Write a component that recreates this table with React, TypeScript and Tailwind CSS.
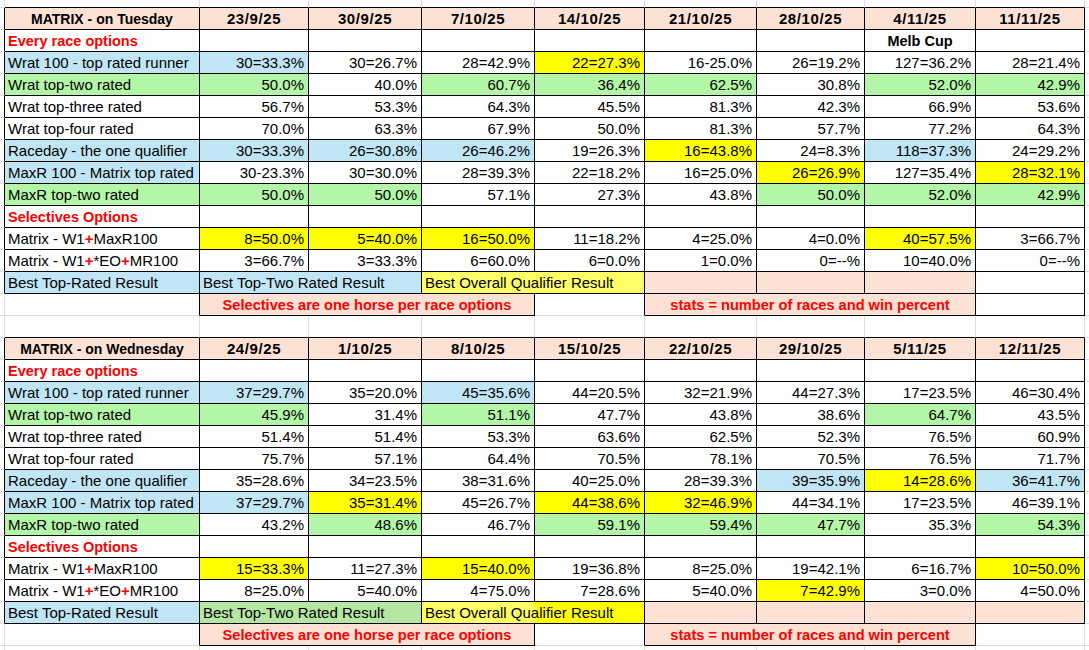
import React from 'react';

type Spec = {
  t?: React.ReactNode;
  bg?: string;
  al?: 'l' | 'r' | 'c';
  bold?: boolean;
  red?: boolean;
  span?: number;
  r?: 'k' | 'g' | 'n';
  b?: 'k' | 'g' | 'n';
  x?: string;
};

const BG: Record<string, string> = {
  b: 'bg-[#C0E6F5]',
  g: 'bg-[#B3F6A8]',
  y: 'bg-[#FFFF00]',
  ly: 'bg-[#FFFF66]',
  p: 'bg-[#FBE2D5]',
  dg: 'bg-[#B5E6A2]',
  w: '',
  split: 'bg-[linear-gradient(to_right,#FFFF66_113px,#FFFF00_113px)]',
};
const SPAN: Record<number, string> = { 1: '', 2: 'col-span-2', 3: 'col-span-3' };
const RB = { k: 'border-r border-r-black', g: 'border-r border-r-[#DCDCDC]', n: '' };
const BB = { k: 'border-b border-b-black', g: 'border-b border-b-[#DCDCDC]', n: '' };
const AL = { l: 'text-left pl-[3px]', r: 'text-right pr-[4px]', c: 'text-center' };

function Cell({ s }: { s: Spec }) {
  const cls = [
    'box-border overflow-hidden whitespace-nowrap leading-[22px]',
    SPAN[s.span ?? 1],
    BG[s.bg ?? 'w'],
    AL[s.al ?? 'l'],
    RB[s.r ?? 'k'],
    BB[s.b ?? 'k'],
    s.bold ? 'font-bold' : '',
    s.red ? 'text-[#FF0000]' : '',
    s.x ?? '',
  ].join(' ');
  return <div className={cls}>{s.t}</div>;
}

function Label({ s }: { s: string }) {
  if (!s.includes('+')) return <>{s}</>;
  const parts = s.split('+');
  return (
    <>
      {parts.map((p, i) => (
        <React.Fragment key={i}>
          {i > 0 && <span className="font-bold text-[#FF0000]">+</span>}
          {p}
        </React.Fragment>
      ))}
    </>
  );
}

type TableData = {
  title: string;
  dates: string[];
  melb: boolean;
  rows: [string, string, string[]][];
  sel: [string[], string[]];
  bestTwo: string;
  bestOverall: string;
  lastBestPeach: boolean;
  lastNoteBordered: boolean;
};

const T1: TableData = {
  title: 'MATRIX - on Tuesday',
  dates: ['23/9/25', '30/9/25', '7/10/25', '14/10/25', '21/10/25', '28/10/25', '4/11/25', '11/11/25'],
  melb: true,
  rows: [
    ['Wrat 100 - top rated runner', 'b', ['30=33.3%:b', '30=26.7%', '28=42.9%', '22=27.3%:y', '16-25.0%', '26=19.2%', '127=36.2%', '28=21.4%']],
    ['Wrat top-two rated', 'g', ['50.0%:g', '40.0%', '60.7%:g', '36.4%:g', '62.5%:g', '30.8%', '52.0%:g', '42.9%:g']],
    ['Wrat top-three rated', 'w', ['56.7%', '53.3%', '64.3%', '45.5%', '81.3%', '42.3%', '66.9%', '53.6%']],
    ['Wrat top-four rated', 'w', ['70.0%', '63.3%', '67.9%', '50.0%', '81.3%', '57.7%', '77.2%', '64.3%']],
    ['Raceday - the one qualifier', 'b', ['30=33.3%:b', '26=30.8%:b', '26=46.2%:b', '19=26.3%', '16=43.8%:y', '24=8.3%', '118=37.3%:b', '24=29.2%']],
    ['MaxR 100 - Matrix top rated', 'b', ['30-23.3%', '30=30.0%', '28=39.3%', '22=18.2%', '16=25.0%', '26=26.9%:y', '127=35.4%', '28=32.1%:y']],
    ['MaxR top-two rated', 'g', ['50.0%:g', '50.0%:g', '57.1%', '27.3%', '43.8%', '50.0%:g', '52.0%:g', '42.9%:g']],
  ],
  sel: [
    ['8=50.0%:y', '5=40.0%:y', '16=50.0%:y', '11=18.2%', '4=25.0%', '4=0.0%', '40=57.5%:y', '3=66.7%'],
    ['3=66.7%', '3=33.3%', '6=60.0%', '6=0.0%', '1=0.0%', '0=--%', '10=40.0%', '0=--%'],
  ],
  bestTwo: 'b',
  bestOverall: 'ly',
  lastBestPeach: false,
  lastNoteBordered: true,
};

const T2: TableData = {
  title: 'MATRIX - on Wednesday',
  dates: ['24/9/25', '1/10/25', '8/10/25', '15/10/25', '22/10/25', '29/10/25', '5/11/25', '12/11/25'],
  melb: false,
  rows: [
    ['Wrat 100 - top rated runner', 'b', ['37=29.7%:b', '35=20.0%', '45=35.6%:b', '44=20.5%', '32=21.9%', '44=27.3%', '17=23.5%', '46=30.4%']],
    ['Wrat top-two rated', 'g', ['45.9%:g', '31.4%', '51.1%:g', '47.7%', '43.8%', '38.6%', '64.7%:g', '43.5%']],
    ['Wrat top-three rated', 'w', ['51.4%', '51.4%', '53.3%', '63.6%', '62.5%', '52.3%', '76.5%', '60.9%']],
    ['Wrat top-four rated', 'w', ['75.7%', '57.1%', '64.4%', '70.5%', '78.1%', '70.5%', '76.5%', '71.7%']],
    ['Raceday - the one qualifier', 'b', ['35=28.6%', '34=23.5%', '38=31.6%', '40=25.0%', '28=39.3%', '39=35.9%:b', '14=28.6%:y', '36=41.7%:b']],
    ['MaxR 100 - Matrix top rated', 'b', ['37=29.7%:b', '35=31.4%:y', '45=26.7%', '44=38.6%:y', '32=46.9%:y', '44=34.1%', '17=23.5%', '46=39.1%']],
    ['MaxR top-two rated', 'g', ['43.2%', '48.6%:g', '46.7%', '59.1%:g', '59.4%:g', '47.7%:g', '35.3%', '54.3%:g']],
  ],
  sel: [
    ['15=33.3%:y', '11=27.3%', '15=40.0%:y', '19=36.8%', '8=25.0%', '19=42.1%', '6=16.7%', '10=50.0%:y'],
    ['8=25.0%', '5=40.0%', '4=75.0%', '7=28.6%', '5=40.0%', '7=42.9%:y', '3=0.0%', '4=50.0%'],
  ],
  bestTwo: 'dg',
  bestOverall: 'split',
  lastBestPeach: true,
  lastNoteBordered: false,
};

const PRE: Spec = { r: 'k', b: 'g' };
const POST: Spec = { r: 'n', b: 'g' };

function val(v: string): Spec {
  const [t, c] = v.split(':');
  return { t, bg: c ?? 'w', al: 'r' };
}

function tableSpecs(t: TableData): Spec[] {
  const out: Spec[] = [];
  // header
  out.push(PRE, { t: t.title, bg: 'p', al: 'c', bold: true, x: 'text-[14px]' });
  t.dates.forEach((d) => out.push({ t: d, bg: 'p', al: 'c', bold: true, x: 'tracking-[0.6px]' }));
  out.push(POST);
  // every race options
  out.push(PRE, { t: 'Every race options', red: true, bold: true, x: 'text-[14.5px]' });
  for (let i = 0; i < 8; i++) {
    out.push(i === 6 && t.melb ? { t: 'Melb Cup', al: 'c', bold: true, x: 'text-[14.5px]' } : {});
  }
  out.push(POST);
  // value rows
  t.rows.forEach(([label, bg, vals]) => {
    out.push(PRE, { t: label, bg });
    vals.forEach((v) => out.push(val(v)));
    out.push(POST);
  });
  // selectives
  out.push(PRE, { t: 'Selectives Options', red: true, bold: true, x: 'text-[14.5px]' });
  for (let i = 0; i < 8; i++) out.push({});
  out.push(POST);
  const selLabels = ['Matrix - W1+MaxR100', 'Matrix - W1+*EO+MR100'];
  t.sel.forEach((vals, i) => {
    out.push(PRE, { t: <Label s={selLabels[i]} /> });
    vals.forEach((v) => out.push(val(v)));
    out.push(POST);
  });
  // best row
  out.push(
    PRE,
    { t: 'Best Top-Rated Result', bg: 'b' },
    { t: 'Best Top-Two Rated Result', bg: t.bestTwo, span: 2 },
    { t: 'Best Overall Qualifier Result', bg: t.bestOverall, span: 2 },
    { bg: 'p' },
    { bg: 'p' },
    { bg: 'p' },
    { bg: t.lastBestPeach ? 'p' : 'w' },
    POST,
  );
  // note row
  out.push(
    { r: 'g', b: 'g' },
    { r: 'k', b: 'g' },
    { t: 'Selectives are one horse per race options', bg: 'p', span: 3, al: 'c', red: true, bold: true, x: 'text-[14.6px]' },
    { r: 'k', b: 'g' },
    { t: 'stats = number of races and win percent', bg: 'p', span: 3, al: 'c', red: true, bold: true, x: 'text-[14.6px]' },
    t.lastNoteBordered ? { r: 'k', b: 'k' } : { r: 'g', b: 'g' },
    POST,
  );
  return out;
}

function gapRow(bottomBlack: boolean, last = false): Spec[] {
  const out: Spec[] = [];
  out.push({ r: 'g', b: last ? 'n' : 'g' });
  for (let i = 0; i < 9; i++) out.push({ r: 'g', b: last ? 'n' : bottomBlack ? 'k' : 'g' });
  out.push({ r: 'n', b: last ? 'n' : 'g' });
  return out;
}

export default function App() {
  const specs: Spec[] = [
    ...gapRow(true),
    ...tableSpecs(T1),
    ...gapRow(true),
    ...tableSpecs(T2),
    ...gapRow(false, true),
  ];
  return (
    <div className="w-[1089px] h-[650px] overflow-hidden bg-white text-black text-[15px] font-['Liberation_Sans',Arial,sans-serif]">
      <div className="grid grid-cols-[5px_195px_109px_113px_113px_110px_112px_108px_111px_109px_4px] grid-rows-[8px_repeat(14,22px)_22px_repeat(14,22px)_4px]">
        {specs.map((s, i) => (
          <Cell key={i} s={s} />
        ))}
      </div>
    </div>
  );
}
